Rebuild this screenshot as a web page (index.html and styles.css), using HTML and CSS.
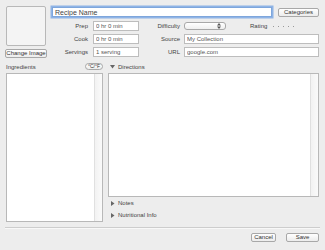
FILE: index.html
```html
<!DOCTYPE html>
<html lang="en">
<head>
    <meta charset="UTF-8">
    <meta name="viewport" content="width=device-width, initial-scale=1.0">
    <title>Edit Recipe</title>
    <link rel="stylesheet" href="styles.css">
</head>
<body>
    <div class="window">
        <div class="header">
            <div class="photo-col">
                <div class="photo"></div>
                <button class="btn change-image">Change Image</button>
            </div>

            <div class="fields">
                <div class="name-row">
                    <input type="text" class="name" value="Recipe Name">
                    <button class="btn categories">Categories</button>
                </div>

                <div class="grid">
                    <label>Prep</label>
                    <input type="text" value="0 hr 0 min">
                    <label>Difficulty</label>
                    <div class="difficulty">
                        <div class="select">
                            <svg width="4" height="6" viewBox="0 0 4 6"><path d="M0 2.5 L2 0 L4 2.5 Z M0 3.5 L2 6 L4 3.5 Z" fill="#555"/></svg>
                        </div>
                        <span class="rating-label">Rating</span>
                        <div class="dots">
                            <span></span><span></span><span></span><span></span><span></span>
                        </div>
                    </div>

                    <label>Cook</label>
                    <input type="text" value="0 hr 0 min">
                    <label>Source</label>
                    <input type="text" value="My Collection">

                    <label>Servings</label>
                    <input type="text" value="1 serving">
                    <label>URL</label>
                    <input type="text" value="google.com">
                </div>
            </div>
        </div>

        <div class="main">
            <div class="left">
                <div class="list-head">
                    <span>Ingredients</span>
                    <button class="btn temp">°C/°F</button>
                </div>
                <div class="box ingredients">
                    <div class="track"></div>
                </div>
            </div>

            <div class="right">
                <div class="list-head disclosure">
                    <svg width="5" height="5" viewBox="0 0 5 5"><path d="M0 1 L5 1 L2.5 4.5 Z" fill="#666"/></svg>
                    <span>Directions</span>
                </div>
                <div class="box directions">
                    <div class="track"></div>
                </div>
                <div class="disclosure section">
                    <svg width="5" height="5" viewBox="0 0 5 5"><path d="M1 0 L4.5 2.5 L1 5 Z" fill="#666"/></svg>
                    <span>Notes</span>
                </div>
                <div class="disclosure section">
                    <svg width="5" height="5" viewBox="0 0 5 5"><path d="M1 0 L4.5 2.5 L1 5 Z" fill="#666"/></svg>
                    <span>Nutritional Info</span>
                </div>
            </div>
        </div>

        <div class="separator"></div>

        <div class="footer">
            <button class="btn cancel">Cancel</button>
            <button class="btn save">Save</button>
        </div>
    </div>
</body>
</html>
```

FILE: styles.css
```css
* {
    margin: 0;
    padding: 0;
    box-sizing: border-box;
    font-family: "Liberation Sans", Arial, sans-serif;
}

body {
    background-color: #ededed;
    width: 325px;
    height: 250px;
    overflow: hidden;
    font-size: 6px;
    color: #444;
}

.window {
    padding: 6px 6px 0 6px;
}

.header {
    display: flex;
}

.photo-col {
    width: 41px;
    display: flex;
    flex-direction: column;
}

.photo {
    width: 40px;
    height: 40px;
    background: #f4f4f4;
    border: 1px solid #b8b8b8;
    border-radius: 2px;
}

.btn {
    background: linear-gradient(#ffffff, #ececec);
    border: 1px solid #a8a8a8;
    border-radius: 2px;
    font-size: 6px;
    color: #333;
    height: 9px;
    line-height: 7px;
    padding: 0;
    white-space: nowrap;
    text-align: center;
}

.change-image {
    width: 42px;
    margin: 3px 0 0 -1px;
}

.fields {
    margin-left: 5px;
    flex: 1;
}

.name-row {
    display: flex;
    align-items: center;
    margin-top: 1px;
}

input {
    height: 10px;
    border: 1px solid #bdbdbd;
    background: white;
    font-size: 6px;
    color: #555;
    padding: 0 2px;
    outline: none;
    width: 100%;
}

input.name {
    width: 220px;
    font-size: 7px;
    color: #444;
    border-color: #7ea6dc;
    box-shadow: 0 0 0 1.5px #8fb4e6;
}

.categories {
    margin-left: 6px;
    width: 41px;
}

.grid {
    margin-top: 4px;
    display: grid;
    grid-template-columns: 41px 46px 45px 1fr;
    grid-auto-rows: 10px;
    row-gap: 3px;
    align-items: center;
}

.grid label {
    text-align: right;
    padding-right: 5px;
}

.grid label:nth-of-type(even) {
    padding-right: 4px;
}

.difficulty {
    display: flex;
    align-items: center;
}

.select {
    width: 42px;
    height: 8px;
    border: 1px solid #a8a8a8;
    border-radius: 3px;
    background: linear-gradient(#ffffff, #efefef);
    display: flex;
    justify-content: flex-end;
    align-items: center;
    padding-right: 4px;
}

.rating-label {
    margin-left: 24px;
}

.dots {
    display: flex;
    gap: 4px;
    margin-left: 6px;
}

.dots span {
    width: 1px;
    height: 1px;
    background: #999;
}

.main {
    display: flex;
    gap: 5px;
    margin-top: 5px;
}

.left {
    width: 97px;
}

.right {
    flex: 1;
}

.list-head {
    height: 7px;
    display: flex;
    align-items: center;
    justify-content: space-between;
}

.temp {
    width: 18px;
    height: 7px;
    line-height: 5px;
    font-size: 5px;
    border-radius: 4px;
}

.box {
    margin-top: 3px;
    background: white;
    border: 1px solid #b8b8b8;
    display: flex;
    justify-content: flex-end;
}

.ingredients {
    height: 149px;
}

.directions {
    height: 124px;
}

.track {
    width: 8px;
    background: linear-gradient(90deg, #f2f2f2, #fafafa);
    border-left: 1px solid #e0e0e0;
}

.disclosure {
    display: flex;
    align-items: center;
    justify-content: flex-start;
    gap: 3px;
    padding-left: 2px;
}

.section {
    height: 8px;
    margin-top: 2px;
}

.section + .section {
    margin-top: 4px;
}

.separator {
    margin: 5px -1px 0 -1px;
    height: 1px;
    background: #cdcdcd;
    box-shadow: 0 1px 0 #f8f8f8;
}

.footer {
    margin-top: 5px;
    display: flex;
    justify-content: flex-end;
    gap: 10px;
}

.cancel {
    width: 25px;
}

.save {
    width: 33px;
}
```
